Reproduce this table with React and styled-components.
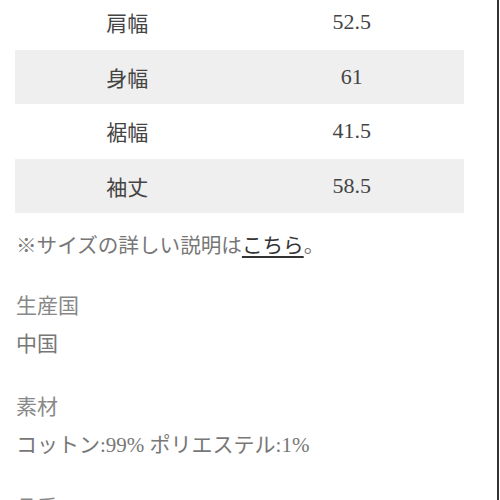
import styled, { createGlobalStyle } from "styled-components"

const GlobalStyle = createGlobalStyle`
    html, body {
        margin: 0;
        padding: 0;
        background: #ffffff;
    }
    body {
        font-family: "Liberation Serif", "Noto Sans CJK JP", serif;
        font-size: 21px;
    }
`

const sizes = [
    { label: "肩幅", value: "52.5" },
    { label: "身幅", value: "61" },
    { label: "裾幅", value: "41.5" },
    { label: "袖丈", value: "58.5" },
]

const specs = [
    { title: "生産国", value: "中国" },
    { title: "素材", value: "コットン:99% ポリエステル:1%" },
    { title: "品番", value: "" },
]

export default function App() {
    return (
        <>
            <GlobalStyle />
            <SCPage>
                <SCSizeTable>
                    {sizes.map((s) => (
                        <SCSizeRow key={s.label}>
                            <SCLabel>{s.label}</SCLabel>
                            <SCValue>{s.value}</SCValue>
                        </SCSizeRow>
                    ))}
                </SCSizeTable>
                <SCNote>
                    ※サイズの詳しい説明は<a href="#">こちら</a>。
                </SCNote>
                {specs.map((sp) => (
                    <SCSpec key={sp.title}>
                        <h3>{sp.title}</h3>
                        {sp.value && <p>{sp.value}</p>}
                    </SCSpec>
                ))}
            </SCPage>
        </>
    )
}

const SCPage = styled.div`
    width: 499px;
    height: 500px;
    box-sizing: border-box;
    overflow: hidden;
    padding: 0 33px 0 15px;
    border-right: 2px solid #333333;
`

const SCSizeTable = styled.div`
    margin-top: -5px;
    display: flex;
    flex-direction: column;
`

const SCSizeRow = styled.div`
    height: 54.5px;
    display: grid;
    grid-template-columns: 1fr 1fr;
    align-items: center;
    text-align: center;
    &:nth-child(even) {
        background-color: #efefef;
    }
`

const SCLabel = styled.span`
    color: #444444;
`

const SCValue = styled.span`
    color: #444444;
    font-size: 22px;
`

const SCNote = styled.p`
    margin: 18px 0 0 1px;
    font-size: 20.6px;
    line-height: 30px;
    color: #777777;
    a {
        color: #333333;
        text-decoration: underline;
        text-underline-offset: 3px;
    }
`

const SCSpec = styled.div`
    margin: 26px 0 0 1px;
    & + & {
        margin-top: 25px;
    }
    h3 {
        margin: 0;
        font-weight: 400;
        font-size: 21px;
        line-height: 38px;
        color: #888888;
    }
    p {
        margin: 0;
        line-height: 38px;
        color: #777777;
    }
`
